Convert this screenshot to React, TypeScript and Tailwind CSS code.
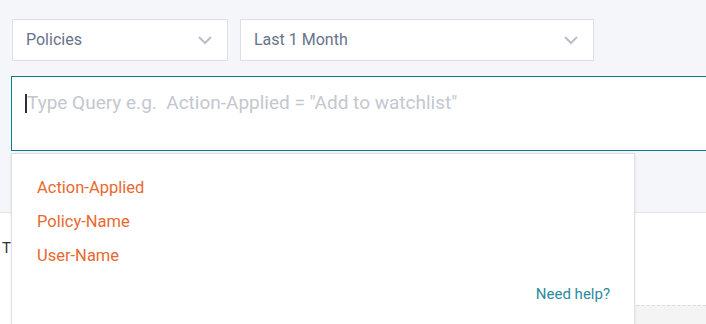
const Chevron = () => (
  <svg className="w-[16px] h-[10px]" viewBox="0 0 16 10" fill="none" stroke="#b9beca" strokeWidth={2}>
    <path d="M2 2l6 6 6-6" />
  </svg>
);

const Select = ({ label, width }: { label: string; width: string }) => (
  <div className={`${width} h-[42px] bg-white border border-[#dcdfe6] flex items-center justify-between pl-[13px] pr-[14px]`}>
    <span className="text-[16px] text-[#687389]">{label}</span>
    <Chevron />
  </div>
);

const App = () => {
  return (
    <div className="relative w-[706px] h-[324px] overflow-hidden bg-white font-['Roboto',sans-serif]">
      <div className="h-[213px] bg-[#f5f6fa] border-b border-[#e2e4e9] pt-[19px]">
        <div className="flex gap-[12px] pl-[12px]">
          <Select label="Policies" width="w-[216px]" />
          <Select label="Last 1 Month" width="w-[354px]" />
        </div>
        <div className="ml-[11px] mt-[15px] w-[720px] h-[75px] bg-white border border-[#0f7d8c] pl-[13px] pt-[14px] flex items-start">
          <span className="w-[2px] h-[19px] bg-[#2b2f3a] mt-[3px]" />
          <span className="text-[19px] leading-[23px] text-[#c4c7cf]">
            Type Query e.g.&nbsp; Action-Applied = "Add to watchlist"
          </span>
        </div>
      </div>

      <div className="h-[111px] flex flex-col">
        <div className="pl-[2px] pt-[24px] text-[15px] text-[#333]">T</div>
        <div className="mt-auto ml-auto w-[80px] h-[19px] border-t border-dashed border-[#d9dbe0] bg-[#f4f4f5]" />
      </div>

      <div className="absolute left-[11px] top-[153px] w-[624px] h-[172px] bg-white border border-[#dedfe3] shadow-[0_1px_3px_rgba(0,0,0,0.08)] flex flex-col pl-[25px] pr-[24px] pt-[24px]">
        <div className="flex flex-col gap-[14px] text-[16.5px] leading-[20px] text-[#e8692e]">
          <span>Action-Applied</span>
          <span>Policy-Name</span>
          <span>User-Name</span>
        </div>
        <div className="ml-auto mt-[17px] text-[15px] text-[#2b8b9c]">Need help?</div>
      </div>
    </div>
  );
};

export default App;
